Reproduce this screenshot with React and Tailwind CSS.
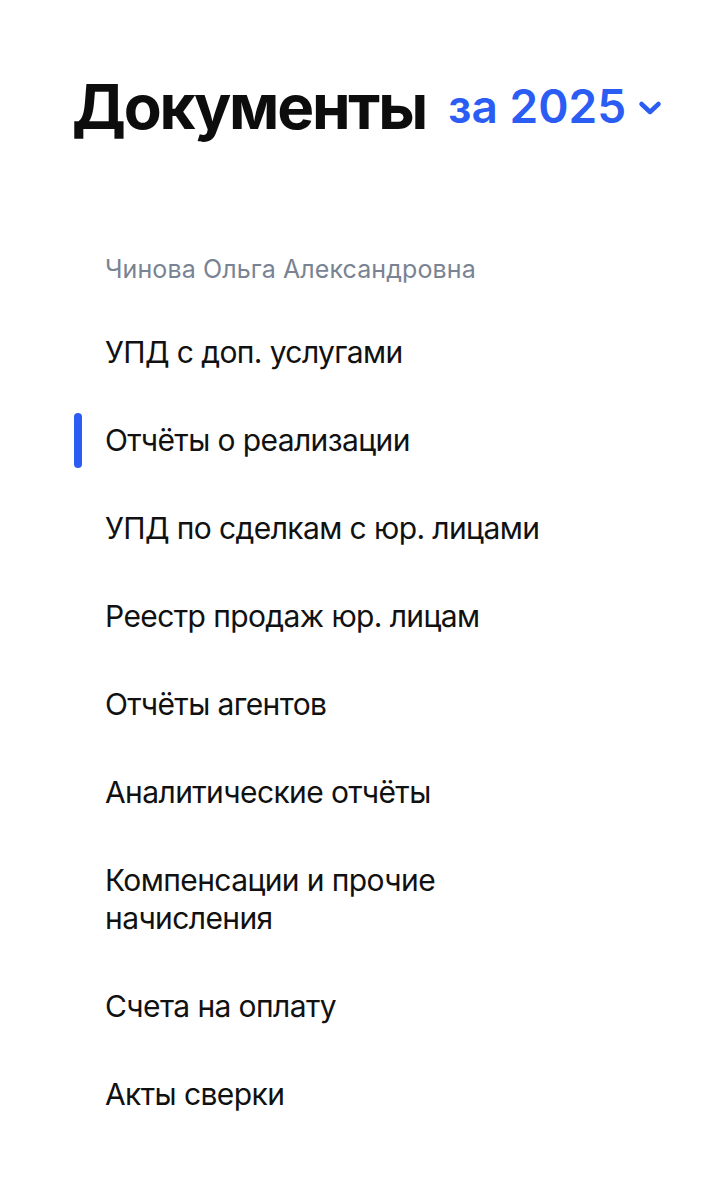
import React from "react";

const items = [
  { title: "УПД с доп. услугами" },
  { title: "Отчёты о реализации", active: true },
  { title: "УПД по сделкам с юр. лицами" },
  { title: "Реестр продаж юр. лицам" },
  { title: "Отчёты агентов" },
  { title: "Аналитические отчёты" },
  { title: "Компенсации и прочие", rest: "начисления" },
  { title: "Счета на оплату" },
  { title: "Акты сверки" },
];

const Chevron = () => (
  <svg width="24" height="16" viewBox="0 0 24 16" fill="none">
    <path
      d="M3.5 4 L12 12 L20.5 4"
      stroke="currentColor"
      strokeWidth="4.5"
      strokeLinecap="round"
      strokeLinejoin="round"
    />
  </svg>
);

const MenuItem = ({ item }) => (
  <div className="flex items-center py-[25px]">
    <div
      className={
        item.active
          ? "w-[8px] h-[55px] -my-[8.5px] rounded-full bg-[#2b5cf3] shrink-0"
          : "w-[8px] h-[38px] shrink-0"
      }
    />
    <div className="ml-[23px] text-[30px] leading-[38px] tracking-[-0.6px] text-[#111111]">
      {item.title}
      {item.rest && (
        <>
          <br />
          {item.rest}
        </>
      )}
    </div>
  </div>
);

export default function App() {
  return (
    <div
      className="min-h-screen bg-white pt-[76px] pl-[72px]"
      style={{ fontFamily: "Inter, 'Noto Sans', sans-serif" }}
    >
      <div className="flex items-start">
        <h1 className="text-[62px] leading-[62px] font-bold text-[#0d0d0d] tracking-[-2.2px]">
          Документы
        </h1>
        <button className="flex items-center mt-[7px] ml-[22px] text-[#2b5cf3]">
          <span className="text-[46px] leading-[46px] font-semibold">за 2025</span>
          <span className="ml-[12px] mt-[4px]">
            <Chevron />
          </span>
        </button>
      </div>

      <div className="mt-[115px] pl-[2px]">
        <div className="ml-[31px] text-[25px] leading-[32px] tracking-[0.1px] text-[#7a8393]">
          Чинова Ольга Александровна
        </div>
        <div className="mt-[23px] flex flex-col">
          {items.map((item) => (
            <MenuItem key={item.title} item={item} />
          ))}
        </div>
      </div>
    </div>
  );
}
